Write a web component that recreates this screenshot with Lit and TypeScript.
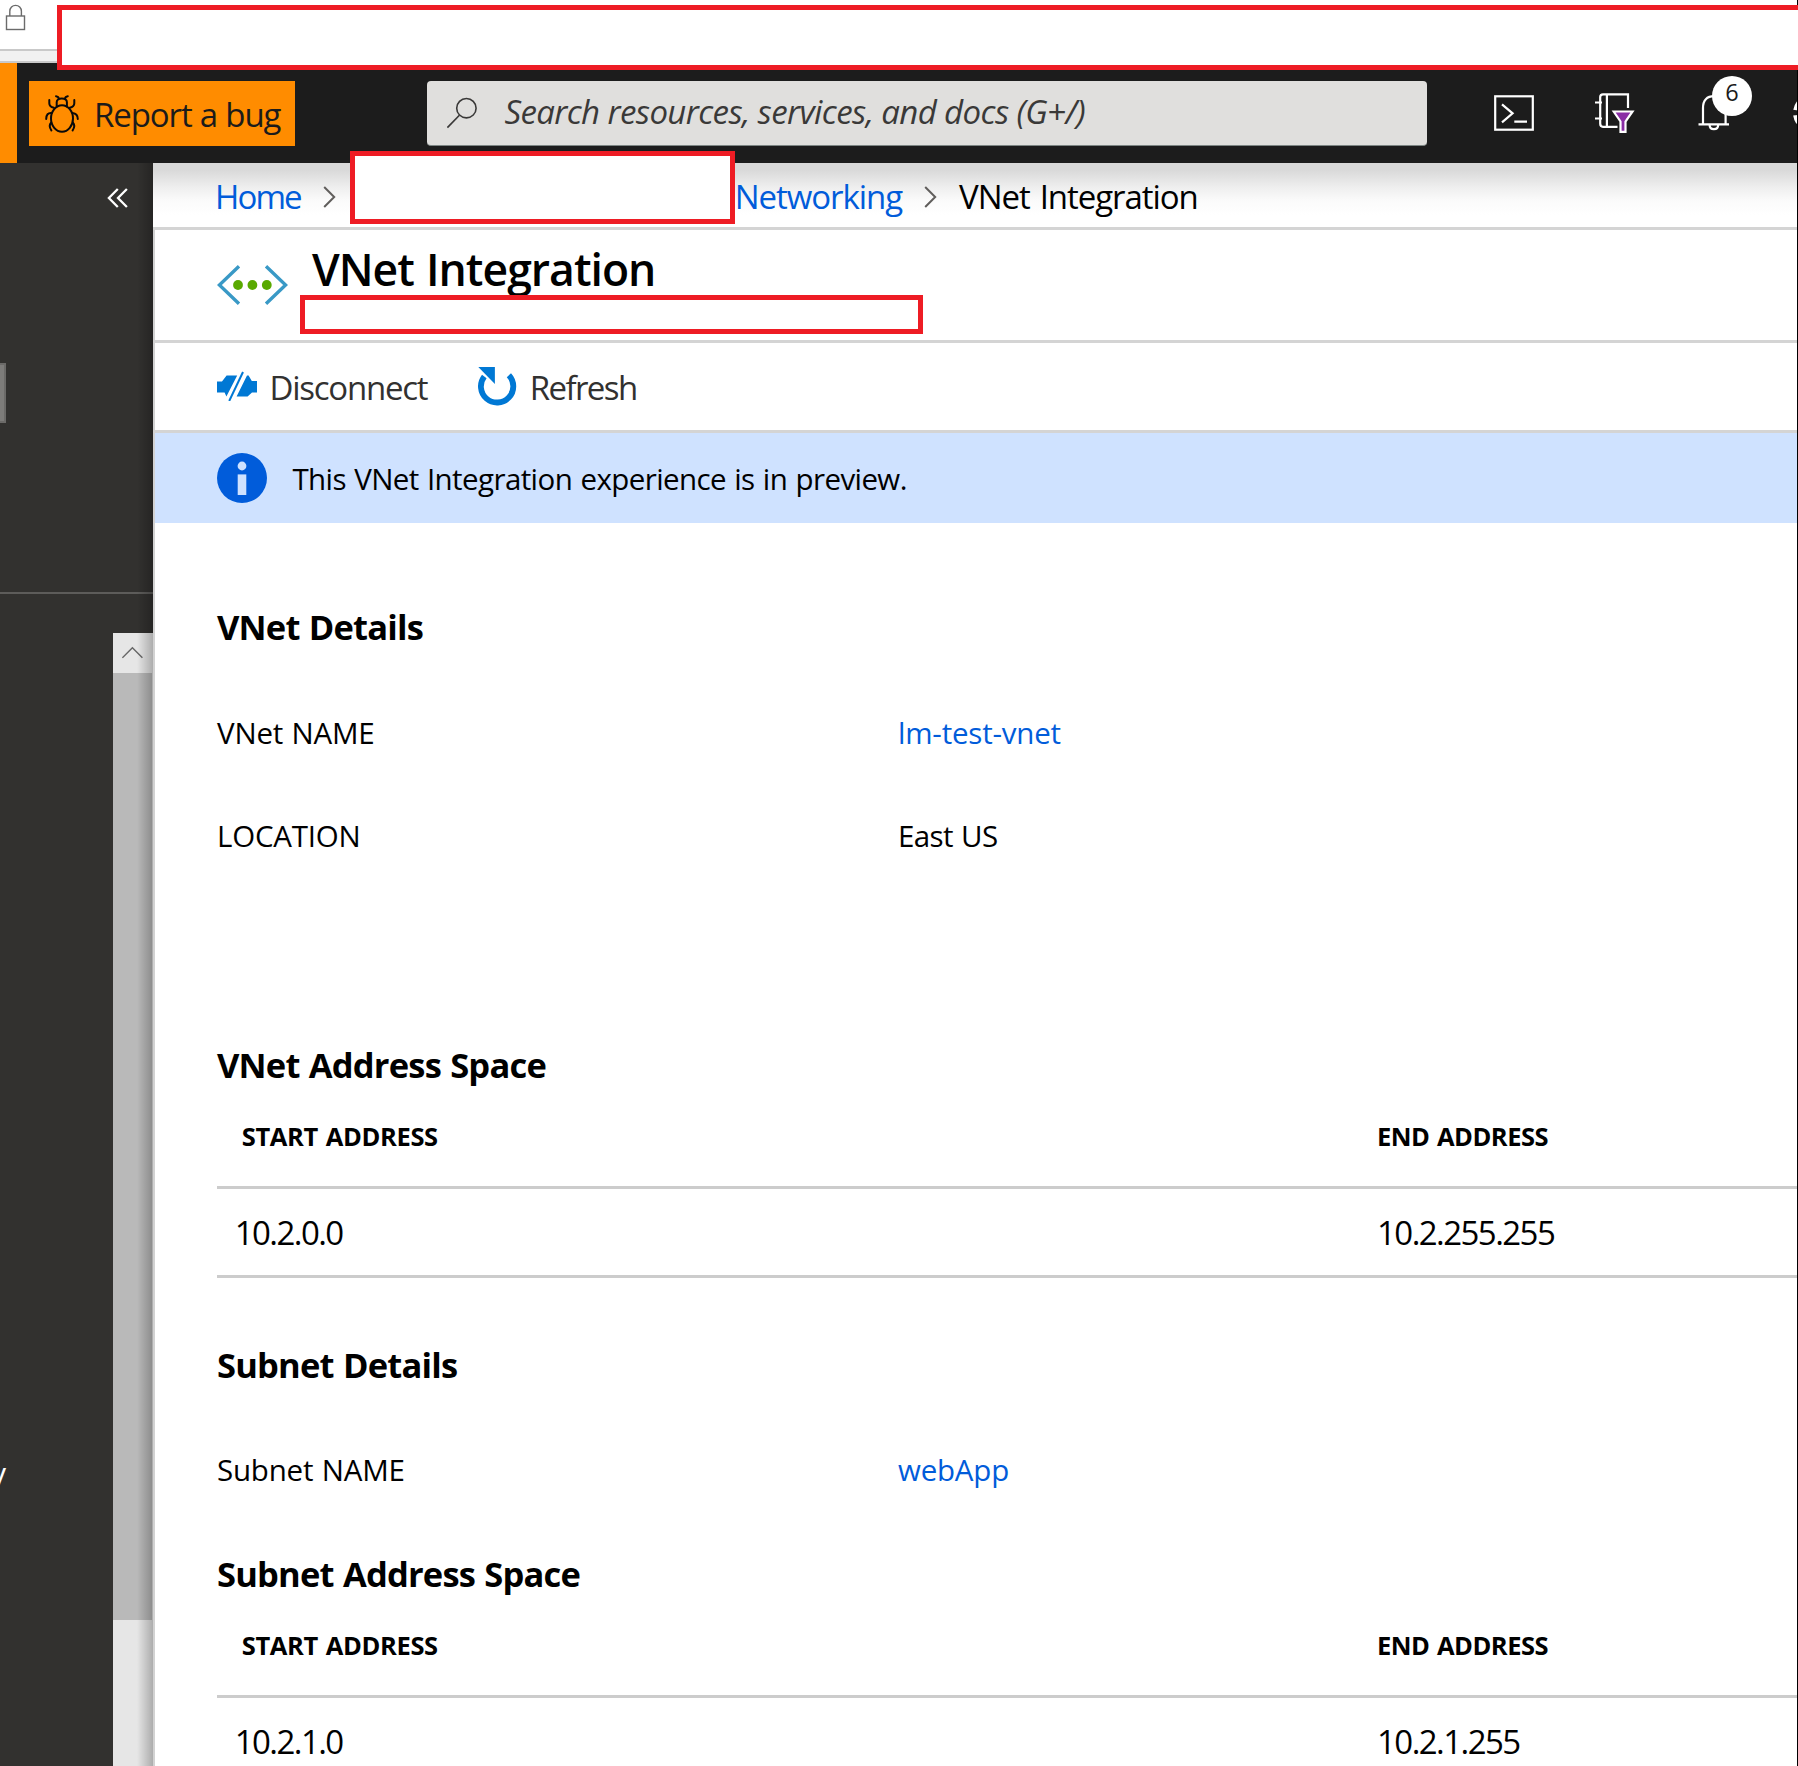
import { LitElement, html, svg, css } from "lit";
import { customElement } from "lit/decorators.js";

type Detail = { label: string; value: string; link?: boolean };
type Range = { start: string; end: string };

const VNET_DETAILS: Detail[] = [
  { label: "VNet NAME", value: "lm-test-vnet", link: true },
  { label: "LOCATION", value: "East US" },
];
const SUBNET_DETAILS: Detail[] = [{ label: "Subnet NAME", value: "webApp", link: true }];
const VNET_RANGE: Range = { start: "10.2.0.0", end: "10.2.255.255" };
const SUBNET_RANGE: Range = { start: "10.2.1.0", end: "10.2.1.255" };

const lockIcon = html`<svg class="lock" width="22" height="28" viewBox="0 0 22 28" fill="none" stroke="#6b6b6b" stroke-width="1.4">
  <rect x="1.5" y="12" width="18" height="13.5" />
  <path d="M4.8 12V7.2a5.8 5.8 0 0 1 11.6 0V12" />
</svg>`;

const bugIcon = html`<svg width="34" height="38" viewBox="0 0 34 38" fill="none" stroke="#0a0a0a" stroke-width="2" stroke-linecap="round">
  <ellipse cx="17" cy="23.5" rx="11" ry="13.2" />
  <path d="M11.7 11.5V7.3q0-3.8 5.1-3.8t5.1 3.8v4.2M13.8 3.6Q13.5 1.6 11 1.2M20 3.6Q20.3 1.6 22.8 1.2" />
  <path d="M4.3 5v3.2q0 3.6 4.6 4.6M29.3 5v3.2q0 3.6-4.6 4.6" />
  <path d="M6.5 18q-5.2-.5-5.3 6M27.5 18q5.2.5 5.3 6" />
  <path d="M6.2 27.5q-3 3 .2 8M27.8 27.5q3 3-.2 8" />
</svg>`;

const searchIcon = html`<svg width="32" height="32" viewBox="0 0 32 32" fill="none" stroke="#3a3938" stroke-width="1.6">
  <circle cx="19.4" cy="11.2" r="9.7" /><path d="M12.4 18.2.4 30.6" />
</svg>`;

const shellIcon = html`<svg width="40" height="36" viewBox="0 0 40 36" fill="none" stroke="#fff" stroke-width="2.2">
  <rect x="1.2" y="1.3" width="37.6" height="33.4" />
  <path d="M8 9.3 18.6 18.3 8 27.3M20.3 26.7H33" />
</svg>`;

const directoryIcon = html`<svg width="41" height="42" viewBox="0 0 41 42" fill="none" stroke="#fff" stroke-width="2.2">
  <path d="M33 16V2.3H8Q5.2 2.3 5.2 5V31.5Q5.2 34.8 8 34.8H22.5M11.9 2.5V34.5" />
  <path d="M0 10.5H7M0 26.5H7" />
  <path d="M18.7 19.5H37.5L30.5 29.5V39.8H25.5V29.5Z" fill="#8a2da5" />
</svg>`;

const bellIcon = html`<svg width="34" height="36" viewBox="0 0 34 36" fill="none" stroke="#fff" stroke-width="2.2">
  <path d="M.5 29.3H31M5 29.3V13Q5 1.2 16.3 1.2T27.6 13V29.3" />
  <path d="M11.6 29.8q0 4.4 4.3 4.4t4.3-4.4" />
</svg>`;

const gearIcon = html`<svg width="40" height="40" viewBox="0 0 40 40" fill="none" stroke="#fff">
  <circle cx="20" cy="20" r="16.5" stroke-width="5" stroke-dasharray="7.6 5.36" stroke-dashoffset="10.28" />
  <circle cx="20" cy="20" r="13" stroke-width="2.2" />
</svg>`;

const collapseIcon = html`<svg width="22" height="20" viewBox="0 0 22 20" fill="none" stroke="#fff" stroke-width="2.3">
  <path d="M10.8 1 1.9 10l8.9 9M19.9 1 11 10l8.9 9" />
</svg>`;

const chevron = html`<svg class="chev" width="13" height="22" viewBox="0 0 13 22" fill="none" stroke="#605e5c" stroke-width="2">
  <path d="M1.2 1 11.2 11 1.2 21" />
</svg>`;

const upIcon = html`<svg width="22" height="14" viewBox="0 0 22 14" fill="none" stroke="#666" stroke-width="1.4">
  <path d="M.4 11.8 10.4 1.8l10 10" />
</svg>`;

const vnetIcon = html`<svg class="vnet" width="71" height="42" viewBox="0 0 71 42">
  <path d="M22 2.2 2.4 21 22 39.8M49 2.2 68.6 21 49 39.8" fill="none" stroke="#3999c6" stroke-width="3.4" />
  ${[21, 35.4, 49.8].map((x) => svg`<circle cx=${x} cy="21" r="4.9" fill="#59a900" />`)}
</svg>`;

const disconnectIcon = html`<svg width="41" height="30" viewBox="0 0 41 30" fill="#0078d4">
  <path d="M0 10.5H5L9.6 4.6H20.2L9.4 25.6 7.6 21.5H0Z" />
  <path d="M31.6 4.6 34.8 10H40V21.5H35L30.6 25.6H19.6L30 4.6Z" />
  <path d="M12.2 30 26 1" stroke="#0078d4" stroke-width="2" fill="none" />
</svg>`;

const refreshIcon = html`<svg width="40" height="41" viewBox="0 0 40 41">
  <path d="M31.9 9.2A16.2 16.2 0 1 1 7.3 10.4" fill="none" stroke="#0078d4" stroke-width="5.8" />
  <path d="M1.3 1H17.9V18Z" fill="#0078d4" />
</svg>`;

const infoIcon = html`<svg class="info" width="50" height="50" viewBox="0 0 50 50">
  <circle cx="25" cy="25" r="25" fill="#015cda" />
  <circle cx="25" cy="13" r="4.4" fill="#cfe2ff" />
  <rect x="20.7" y="21.4" width="8.6" height="20.6" fill="#cfe2ff" />
</svg>`;

@customElement("address-table")
class AddressTable extends LitElement {
  static properties = { range: { attribute: false } };
  declare range: Range;

  static styles = css`
    :host { display: block; }
    .row { display: grid; grid-template-columns: 1160px 1fr; align-items: center; box-sizing: border-box; height: 89px; border-bottom: 3px solid #ccc; }
    .head { height: 99px; padding-bottom: 3px; font-size: 25.5px; font-weight: 700; letter-spacing: -0.5px; word-spacing: 1.5px; }
    .value { padding-top: 2px; font-size: 33px; letter-spacing: -1.55px; }
    .head .first { padding-left: 24.7px; letter-spacing: -0.35px; }
    .value .first { padding-left: 17.7px; }
  `;

  render() {
    return html`
      <div class="row head"><div class="first">START ADDRESS</div><div>END ADDRESS</div></div>
      <div class="row value"><div class="first">${this.range.start}</div><div>${this.range.end}</div></div>
    `;
  }
}

@customElement("app-root")
class AppRoot extends LitElement {
  static styles = css`
    :host { display: block; position: relative; width: 1798px; height: 1766px; overflow: hidden; background: #fff; color: #000; font-family: "Open Sans", "Noto Sans", sans-serif; font-size: 29.5px; line-height: 1.3; white-space: nowrap; }
    svg { display: block; flex: none; }
    .browser { box-sizing: border-box; height: 63px; display: flex; flex-direction: column; justify-content: flex-end; }
    .lock-row { flex: 1; padding: 4px 0 0 5px; }
    .toolstrip { height: 10px; background: #f1f1f1; border-top: 2px solid #c9c9c9; border-bottom: 2px solid #c9c9c9; }
    .topbar { height: 100px; display: flex; align-items: flex-start; background: #1c1c1c; overflow: hidden; }
    .topbar > * { flex: none; }
    .accent { width: 17px; height: 100px; background: #ff8c00; }
    .bug { box-sizing: border-box; width: 266px; height: 65px; margin: 18px 0 0 12px; padding-left: 16px; display: flex; align-items: center; background: #ff8c00; color: #1b1b1b; font-size: 33px; letter-spacing: -1.1px; word-spacing: 0.8px; }
    .bug span { padding: 3px 0 0 15px; }
    .search { box-sizing: border-box; width: 1000px; height: 65px; margin: 18px 0 0 132px; padding-left: 20px; display: flex; align-items: center; background: #e0dfdd; border-bottom: 1px solid #7d8583; border-radius: 4px; color: #3a3938; font-size: 33px; font-style: italic; letter-spacing: -0.6px; }
    .search span { padding: 0 0 1px 25.4px; }
    .tools { display: flex; align-items: flex-start; }
    .shell { margin: 32px 0 0 67px; }
    .dir { margin: 29px 0 0 60.5px; }
    .bell { position: relative; margin: 32px 0 0 62.5px; }
    .badge { position: absolute; left: 14px; top: -19px; width: 40px; height: 40px; border-radius: 50%; background: #fff; color: #1b1b1b; font-size: 23.5px; line-height: 33px; text-align: center; }
    .gear { margin: 30px 0 0 59.5px; }
    .main { display: flex; height: 1603px; }

    .side { position: relative; width: 153px; flex: none; overflow: hidden; background: #32312f; }
    .side::after { content: ""; position: absolute; top: 0; right: 0; bottom: 0; width: 16px; background: linear-gradient(90deg, rgba(0,0,0,0), rgba(0,0,0,.25)); }
    .collapse { display: flex; justify-content: flex-end; padding: 25px 24px 0 0; }
    .field { box-sizing: border-box; width: 6px; height: 60px; margin-top: 155px; background: #7d7c7a; border: 2px solid #6b6a68; border-left: 0; }
    .rule { height: 2px; margin-top: 169px; background: #5d5c5a; }
    .scroll { width: 40px; height: 1133px; margin: 39px 0 0 auto; background: #e6e6e6; }
    .up { height: 40px; display: flex; justify-content: center; align-items: center; }
    .thumb { width: 39px; height: 947px; background: #b9b9b9; }
    .clip { position: absolute; left: -9px; top: 1290px; color: #fff; font-size: 30px; line-height: 40px; }

    .content { flex: 1; min-width: 0; position: relative; }
    .crumbs { box-sizing: border-box; height: 67px; padding: 4px 0 0 62px; display: flex; align-items: center; border-bottom: 3px solid #d4d4d4; background: linear-gradient(#d9d9d9 0, #d9d9d9 7px, #eee 24px, #fbfbfb 38px, #fff 52px); font-size: 33px; letter-spacing: -1.05px; word-spacing: 2.5px; }
    .link { color: #015cda; }
    .home { letter-spacing: -1.9px; }
    .chev { margin: 0 22px 0 22px; }
    .hidden-crumb { width: 377px; }
    .blade { border-left: 2px solid #d2d2d2; height: 1536px; }
    .title { box-sizing: border-box; height: 113px; padding-left: 62px; display: flex; border-bottom: 3px solid #d4d4d4; }
    .vnet { margin: 34px 0.5px 0 -0.5px; }
    .title h1 { margin: 9px 0 0 24px; font-size: 44.5px; line-height: 60px; font-weight: 600; letter-spacing: -0.98px; word-spacing: 1.5px; }
    .cmds { box-sizing: border-box; height: 90px; padding-left: 62px; display: flex; align-items: center; border-bottom: 3px solid #d4d4d4; color: #323130; font-size: 33px; letter-spacing: -1.25px; }
    .cmd { display: flex; align-items: center; }
    .cmd + .cmd { margin-left: 50px; letter-spacing: -1.6px; }
    .cmd span { padding: 3px 0 0 11.5px; }
    .cmd + .cmd span { padding-left: 12.5px; }
    .banner { height: 90px; padding-left: 62px; display: flex; align-items: center; background: #cfe2ff; letter-spacing: -0.59px; word-spacing: 1.2px; }
    .banner span { padding: 2px 0 0 25.4px; }
    .body { padding: 79px 0 0 62px; }
    h2 { margin: 0; height: 50px; line-height: 49px; font-size: 34.5px; font-weight: 700; letter-spacing: -0.8px; word-spacing: 1px; }
    .details { margin: 28px 0 154px; }
    .detail { box-sizing: border-box; height: 103px; padding-top: 3px; display: grid; grid-template-columns: 681px 1fr; align-items: center; letter-spacing: -0.2px; word-spacing: 1px; }
    .detail > :last-child { letter-spacing: -0.6px; }
    .detail > .link { letter-spacing: -0.2px; }
    .subnet { margin-top: 62px; }
    .subnet-details { margin: 27px 0 29px; }

    .redact { position: absolute; box-sizing: border-box; background: #fff; border: 5px solid #ee1c24; }
    .r-url { left: 57px; top: 5px; width: 1760px; height: 65px; }
    .r-crumb { left: 350px; top: 151px; width: 385px; height: 73px; }
    .r-name { left: 300px; top: 295px; width: 623px; height: 39px; }
    .edge { position: absolute; right: 0; top: 0; width: 1px; height: 1766px; background: #000; }
  `;

  private details(rows: Detail[]) {
    return rows.map(
      (r) => html`<div class="detail"><div>${r.label}</div><div class=${r.link ? "link" : ""}>${r.value}</div></div>`
    );
  }

  render() {
    return html`
      <div class="browser">
        <div class="lock-row">${lockIcon}</div>
        <div class="toolstrip"></div>
      </div>
      <div class="topbar">
        <div class="accent"></div>
        <div class="bug">${bugIcon}<span>Report a bug</span></div>
        <div class="search">${searchIcon}<span>Search resources, services, and docs (G+/)</span></div>
        <div class="tools">
          <div class="shell">${shellIcon}</div>
          <div class="dir">${directoryIcon}</div>
          <div class="bell">${bellIcon}<div class="badge">6</div></div>
          <div class="gear">${gearIcon}</div>
        </div>
      </div>
      <div class="main">
        <div class="side">
          <div class="collapse">${collapseIcon}</div>
          <div class="field"></div>
          <div class="rule"></div>
          <div class="scroll"><div class="up">${upIcon}</div><div class="thumb"></div></div>
          <div class="clip">y</div>
        </div>
        <div class="content">
          <div class="crumbs">
            <span class="link home">Home</span>${chevron}
            <span class="hidden-crumb"></span>
            <span class="link">Networking</span>${chevron}
            <span>VNet Integration</span>
          </div>
          <div class="blade">
            <div class="title">${vnetIcon}<h1>VNet Integration</h1></div>
            <div class="cmds">
              <div class="cmd">${disconnectIcon}<span>Disconnect</span></div>
              <div class="cmd">${refreshIcon}<span>Refresh</span></div>
            </div>
            <div class="banner">${infoIcon}<span>This VNet Integration experience is in preview.</span></div>
            <div class="body">
              <h2>VNet Details</h2>
              <div class="details">${this.details(VNET_DETAILS)}</div>
              <h2>VNet Address Space</h2>
              <address-table .range=${VNET_RANGE}></address-table>
              <h2 class="subnet">Subnet Details</h2>
              <div class="subnet-details">${this.details(SUBNET_DETAILS)}</div>
              <h2>Subnet Address Space</h2>
              <address-table .range=${SUBNET_RANGE}></address-table>
            </div>
          </div>
        </div>
      </div>
      <div class="edge"></div>
      <div class="redact r-url"></div>
      <div class="redact r-crumb"></div>
      <div class="redact r-name"></div>
    `;
  }
}
